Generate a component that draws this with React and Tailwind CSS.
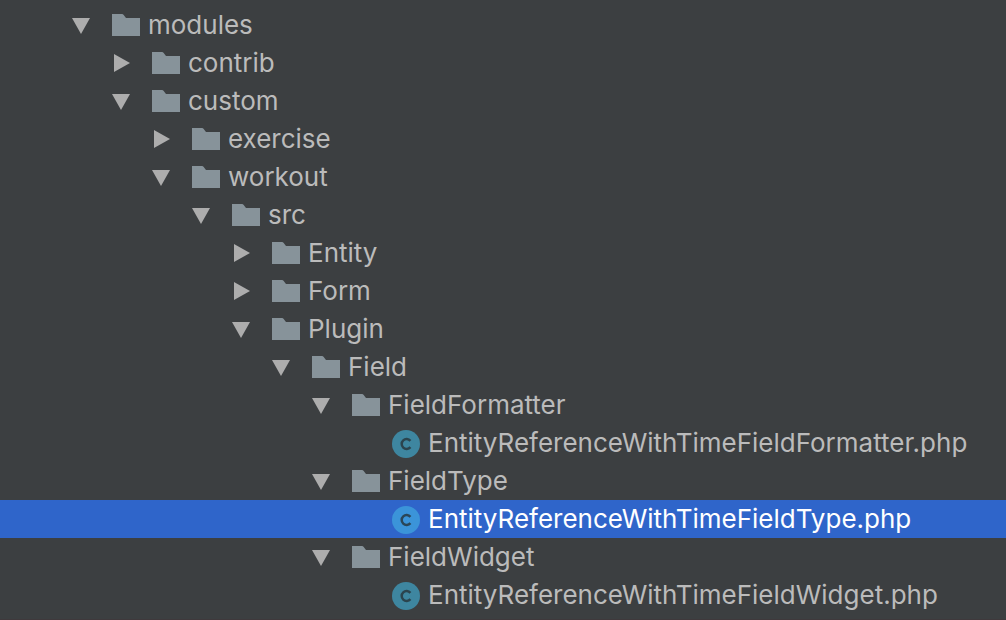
import React, { useState } from "react";
import clsx from "clsx";

const TREE = {
  name: "modules",
  open: true,
  children: [
    { name: "contrib", children: [] },
    {
      name: "custom",
      open: true,
      children: [
        { name: "exercise", children: [] },
        {
          name: "workout",
          open: true,
          children: [
            {
              name: "src",
              open: true,
              children: [
                { name: "Entity", children: [] },
                { name: "Form", children: [] },
                {
                  name: "Plugin",
                  open: true,
                  children: [
                    {
                      name: "Field",
                      open: true,
                      children: [
                        {
                          name: "FieldFormatter",
                          open: true,
                          children: [
                            { name: "EntityReferenceWithTimeFieldFormatter.php" },
                          ],
                        },
                        {
                          name: "FieldType",
                          open: true,
                          children: [
                            { name: "EntityReferenceWithTimeFieldType.php" },
                          ],
                        },
                        {
                          name: "FieldWidget",
                          open: true,
                          children: [
                            { name: "EntityReferenceWithTimeFieldWidget.php" },
                          ],
                        },
                      ],
                    },
                  ],
                },
              ],
            },
          ],
        },
      ],
    },
  ],
};

function Arrow({ open }) {
  return (
    <svg viewBox="0 0 20 20" className="size-5 fill-[#adadad]" aria-hidden="true">
      <path d={open ? "M1 3H19L10 19Z" : "M3 1L19 10L3 19Z"} />
    </svg>
  );
}

function FolderIcon() {
  return (
    <svg viewBox="0 0 28 22" className="h-[22px] w-7 fill-[#87939a]" aria-hidden="true">
      <path d="M0 0H10Q11 0 11.7 1L14 4H28V22H0Z" />
    </svg>
  );
}

function ClassIcon({ selected }) {
  return (
    <svg viewBox="0 0 28 28" className="mt-0.5 size-7" aria-hidden="true">
      <circle cx="14" cy="14" r="14" className={selected ? "fill-[#3b94d9]" : "fill-[#3e86a0]"} />
      <path
        d="M18.4 10.9A4.9 4.9 0 1 0 18.4 17.1"
        fill="none"
        strokeWidth="2.5"
        className={selected ? "stroke-[#2a4658]" : "stroke-[#2b444e]"}
      />
    </svg>
  );
}

function TreeNode({ node, depth, selected, onSelect }) {
  const [open, setOpen] = useState(Boolean(node.open));
  const isFolder = Boolean(node.children);
  const isSelected = selected === node.name;

  return (
    <li>
      <div
        className={clsx(
          "flex h-[38px] items-center pl-[71px]",
          isSelected ? "bg-[#2f65ca] text-white" : "text-[#bbbbbb]"
        )}
      >
        <div className="shrink-0" style={{ width: depth * 40 }} />
        <div className="mr-[21px] flex w-5 shrink-0">
          {isFolder && (
            <button
              type="button"
              aria-label={node.name}
              aria-expanded={open}
              onClick={() => setOpen(!open)}
            >
              <Arrow open={open} />
            </button>
          )}
        </div>
        <button
          type="button"
          className="flex items-center gap-2 whitespace-nowrap"
          onClick={() => onSelect(node.name)}
        >
          {isFolder ? <FolderIcon /> : <ClassIcon selected={isSelected} />}
          <span>{node.name}</span>
        </button>
      </div>
      {isFolder && open && node.children.length > 0 && (
        <ul>
          {node.children.map((child) => (
            <TreeNode
              key={child.name}
              node={child}
              depth={depth + 1}
              selected={selected}
              onSelect={onSelect}
            />
          ))}
        </ul>
      )}
    </li>
  );
}

function App() {
  const [selected, setSelected] = useState("EntityReferenceWithTimeFieldType.php");

  return (
    <div className="min-h-screen overflow-hidden border-b border-[#3f393c] bg-[#3c3f41] pt-1.5 font-['Inter',sans-serif] text-[26px] leading-[38px]">
      <ul>
        <TreeNode node={TREE} depth={0} selected={selected} onSelect={setSelected} />
      </ul>
    </div>
  );
}

export default App;
